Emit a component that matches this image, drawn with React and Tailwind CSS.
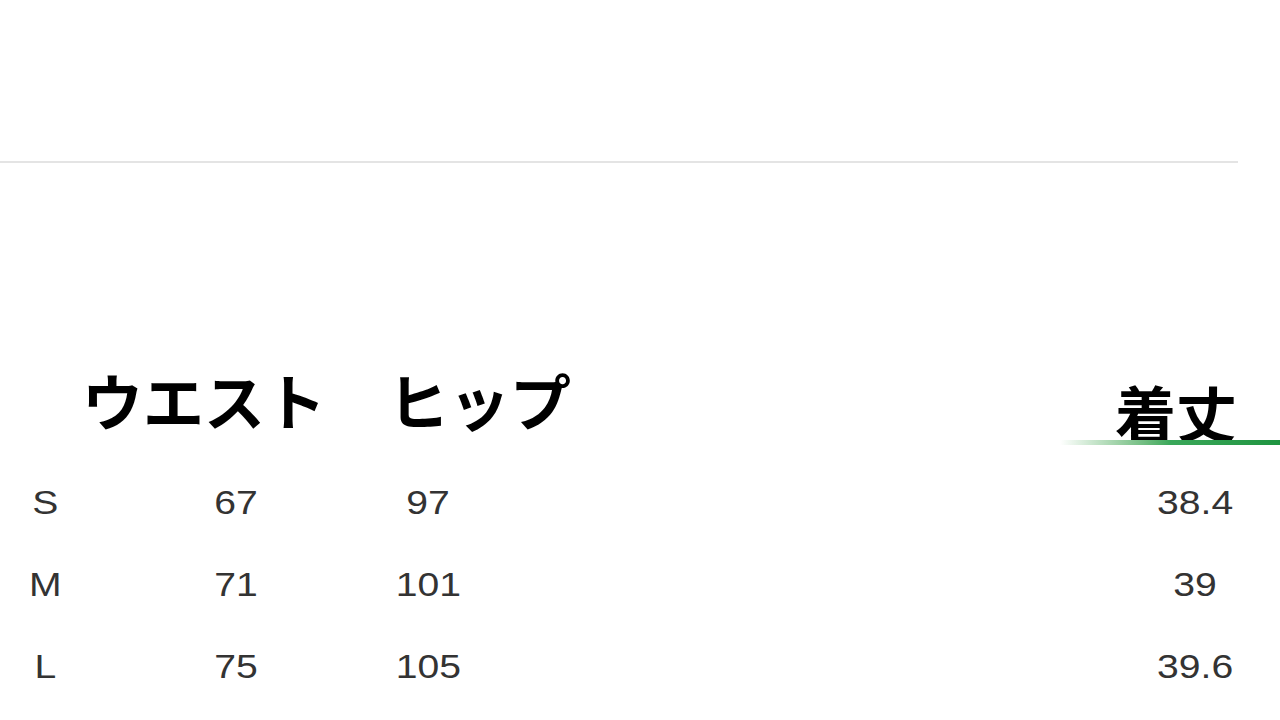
const rows = [
  { size: "S", waist: "67", hip: "97", length: "38.4" },
  { size: "M", waist: "71", hip: "101", length: "39" },
  { size: "L", waist: "75", hip: "105", length: "39.6" },
];

export default function App() {
  return (
    <div className="w-[1280px] h-[720px] bg-white overflow-hidden">
      <div className="h-[161px]" />
      <div className="h-[2px] w-[1238px] bg-[#e4e4e4]" />

      {/* headers */}
      <div className="mt-[206px] h-[72px] flex font-['Noto_Sans_CJK_JP',sans-serif] text-[61px] leading-none font-semibold text-black">
        <div className="ml-[82px] w-[306px]">ウエスト</div>
        <div className="w-[727px]">ヒップ</div>
        <div className="pt-[12px]">着丈</div>
      </div>
      <div className="flex justify-end -mt-[1px]">
        <div className="h-[5px] w-[220px] bg-gradient-to-r from-white via-[#3aa85a] to-[#1e9440]" />
      </div>

      {/* rows */}
      <div className="mt-[40px] flex flex-col gap-[48px] font-['Liberation_Sans',Arial,sans-serif] text-[34px] leading-none text-[#333]">
        {rows.map((r) => (
          <div key={r.size} className="flex h-[34px] items-center">
            <div className="w-[90px] text-center"><span className="inline-block scale-x-[1.15]">{r.size}</span></div>
            <div className="w-[292px] text-center"><span className="inline-block scale-x-[1.15]">{r.waist}</span></div>
            <div className="w-[92px] text-center"><span className="inline-block scale-x-[1.15]">{r.hip}</span></div>
            <div className="flex-1" />
            <div className="w-[170px] text-center"><span className="inline-block scale-x-[1.15]">{r.length}</span></div>
          </div>
        ))}
      </div>
    </div>
  );
}
